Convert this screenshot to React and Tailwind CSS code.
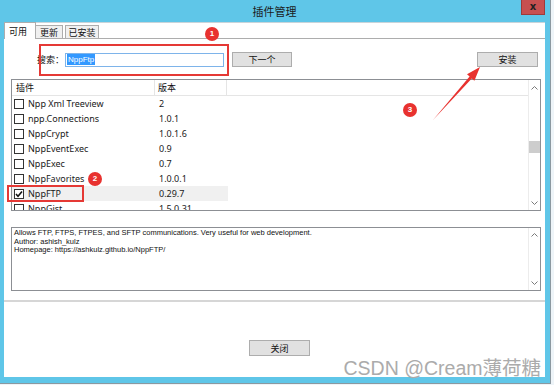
const rows = [
  ["Npp Xml Treeview", "2"],
  ["npp.Connections", "1.0.1"],
  ["NppCrypt", "1.0.1.6"],
  ["NppEventExec", "0.9"],
  ["NppExec", "0.7"],
  ["NppFavorites", "1.0.0.1"],
  ["NppFTP", "0.29.7", true],
  ["NppGist", "1.5.0.31"],
];

const ui = { fontFamily: '"Noto Sans", "Noto Sans CJK SC", sans-serif' };
const cjk = { fontFamily: '"Noto Sans CJK SC", sans-serif' };

function Chevron({ up }) {
  return (
    <svg width="7" height="4" viewBox="0 0 7 4">
      <path
        d={up ? "M0.5 3.5 L3.5 0.5 L6.5 3.5" : "M0.5 0.5 L3.5 3.5 L6.5 0.5"}
        fill="none"
        stroke="#7a7a7a"
        strokeWidth="1"
      />
    </svg>
  );
}

function Badge({ n, className }) {
  return (
    <div
      className={`absolute w-[14px] h-[14px] rounded-full bg-[#e8322f] text-white text-[8px] font-bold flex items-center justify-center ${className}`}
      style={{ fontFamily: '"Liberation Sans", sans-serif' }}
    >
      {n}
    </div>
  );
}

function Button({ children, className }) {
  return (
    <div
      className={`h-[15px] bg-[#e1e1e1] border border-[#adadad] flex items-center justify-center text-[9px] text-[#111] leading-none ${className}`}
      style={cjk}
    >
      {children}
    </div>
  );
}

export default function App() {
  return (
    <div className="relative w-[554px] h-[385px] overflow-hidden bg-[#eef4f8]">
      <div className="w-[551px] h-[384px] bg-[#5fc6e8] border-r border-b border-[#8b98a0] flex flex-col pl-[4px] pr-[5px] pb-[6px]">
        {/* title bar */}
        <div className="h-[22px] shrink-0 grid grid-cols-[24px_1fr_24px] items-start">
          <div />
          <div className="text-center text-[11px] leading-[22px] text-[#1b1b1b]" style={cjk}>
            插件管理
          </div>
          <div className="h-[15px] bg-[#c75050] border border-[#9e3a3a] border-t-0 flex items-center justify-center text-[10px] font-bold text-[#222] leading-none" style={{ fontFamily: '"DejaVu Sans", sans-serif' }}>
            x
          </div>
        </div>

        {/* client */}
        <div className="flex-1 bg-white flex flex-col border-t border-[#c8d4da]">
          {/* tabs */}
          <div className="h-[16px] flex items-end relative z-10 -mb-px text-[9px] leading-none" style={cjk}>
            <div className="w-[32px] h-[17px] bg-white border border-b-0 border-[#adadad] flex items-center pl-[4px] text-[#111]">
              可用
            </div>
            <div className="w-[27px] h-[14px] bg-[#f0f0f0] border border-l-0 border-[#adadad] flex items-center justify-center text-[#111]">
              更新
            </div>
            <div className="w-[34px] h-[14px] ml-[2px] bg-[#f0f0f0] border border-[#adadad] flex items-center justify-center text-[#111]">
              已安装
            </div>
          </div>

          {/* tab panel */}
          <div className="h-[264px] border-t border-[#adadad] border-b-2 border-b-[#d6d6d6] flex flex-col">
            <div className="flex items-center h-[15px] mt-[13px]">
              <span className="ml-[33px] text-[9px] text-[#111] leading-none" style={cjk}>
                搜索：
              </span>
              <div className="ml-[1px] w-[159px] h-[14px] border border-[#7eb4ea] flex items-center pl-[1px]">
                <span className="bg-[#3399ff] text-white text-[8px] leading-[11px] px-[1px]" style={{ fontFamily: '"Liberation Sans", sans-serif' }}>
                  NppFtp
                </span>
              </div>
              <Button className="ml-[8px] w-[60px]">下一个</Button>
              <Button className="ml-auto mr-[7px] w-[61px]">安装</Button>
            </div>

            {/* list */}
            <div className="ml-[7px] mt-[12px] w-[530px] h-[132px] border border-[#8c8f94] flex overflow-hidden" style={ui}>
              <div className="flex-1 flex flex-col">
                <div className="h-[16px] shrink-0 flex border-b border-[#e5e5e5] text-[9px] text-[#111]" style={cjk}>
                  <div className="w-[143px] border-r border-[#e5e5e5] pl-[4px] leading-[15px]">插件</div>
                  <div className="w-[72px] border-r border-[#e5e5e5] pl-[3px] leading-[15px]">版本</div>
                </div>
                {rows.map(([name, ver, checked]) => (
                  <div key={name} className="h-[15px] shrink-0 flex items-center text-[9px] text-[#1a1a1a]">
                    <div className={`w-[216px] h-[15px] flex items-center ${checked ? "bg-[#f0f0f0]" : ""}`}>
                      <div className="ml-[2px] w-[10px] h-[10px] border border-[#333] bg-white flex items-center justify-center">
                        {checked && (
                          <svg width="8" height="8" viewBox="0 0 8 8">
                            <path d="M1 4 L3 6.2 L7 1.5" fill="none" stroke="#111" strokeWidth="1.6" />
                          </svg>
                        )}
                      </div>
                      <span className="ml-[4px] w-[131px]">{name}</span>
                      <span>{ver}</span>
                    </div>
                  </div>
                ))}
              </div>
              <div className="w-[12px] shrink-0 border-l border-[#ececec] bg-white flex flex-col items-center">
                <div className="h-[15px] flex items-center"><Chevron up /></div>
                <div className="h-[46px]" />
                <div className="w-[12px] h-[12px] bg-[#cdcdcd]" />
                <div className="flex-1" />
                <div className="h-[14px] flex items-center"><Chevron /></div>
              </div>
            </div>

            {/* description */}
            <div className="ml-[7px] mt-[16px] w-[530px] h-[64px] border border-[#8c8f94] flex" style={{ fontFamily: '"Liberation Sans", sans-serif' }}>
              <div className="flex-1 pl-[2px] pt-[1px] text-[7.5px] leading-[8.5px] text-[#111]">
                <div>Allows FTP, FTPS, FTPES, and SFTP communications. Very useful for web development.</div>
                <div>Author: ashish_kulz</div>
                <div>Homepage: https://ashkulz.github.io/NppFTP/</div>
              </div>
              <div className="w-[12px] shrink-0 border-l border-[#ececec] flex flex-col items-center justify-between py-[5px]">
                <Chevron up />
                <Chevron />
              </div>
            </div>
          </div>

          {/* bottom */}
          <div className="flex-1 flex items-start">
            <Button className="ml-[245px] mt-[38px] w-[61px] h-[16px]">关闭</Button>
          </div>
        </div>
      </div>

      {/* annotations */}
      <div className="absolute left-[39px] top-[44px] w-[190px] h-[32px] border-2 border-[#e53935]" />
      <div className="absolute left-[7px] top-[185px] w-[77px] h-[17px] border-2 border-[#e53935]" />
      <Badge n="1" className="left-[205px] top-[27px]" />
      <Badge n="2" className="left-[88px] top-[172px]" />
      <Badge n="3" className="left-[403px] top-[103px]" />
      <svg className="absolute left-0 top-0" width="554" height="385">
        <polygon
          points="433,120 469.6,76.5 467,74.2 480,67 474.4,80.8 471.8,78.5"
          fill="#e8322f"
        />
      </svg>
      <div
        className="absolute right-[13px] bottom-[7px] text-[19.5px] leading-none text-[#ababab]"
        style={{ fontFamily: '"Liberation Sans", "Noto Sans CJK SC", sans-serif' }}
      >
        CSDN @Cream薄荷糖
      </div>
    </div>
  );
}
